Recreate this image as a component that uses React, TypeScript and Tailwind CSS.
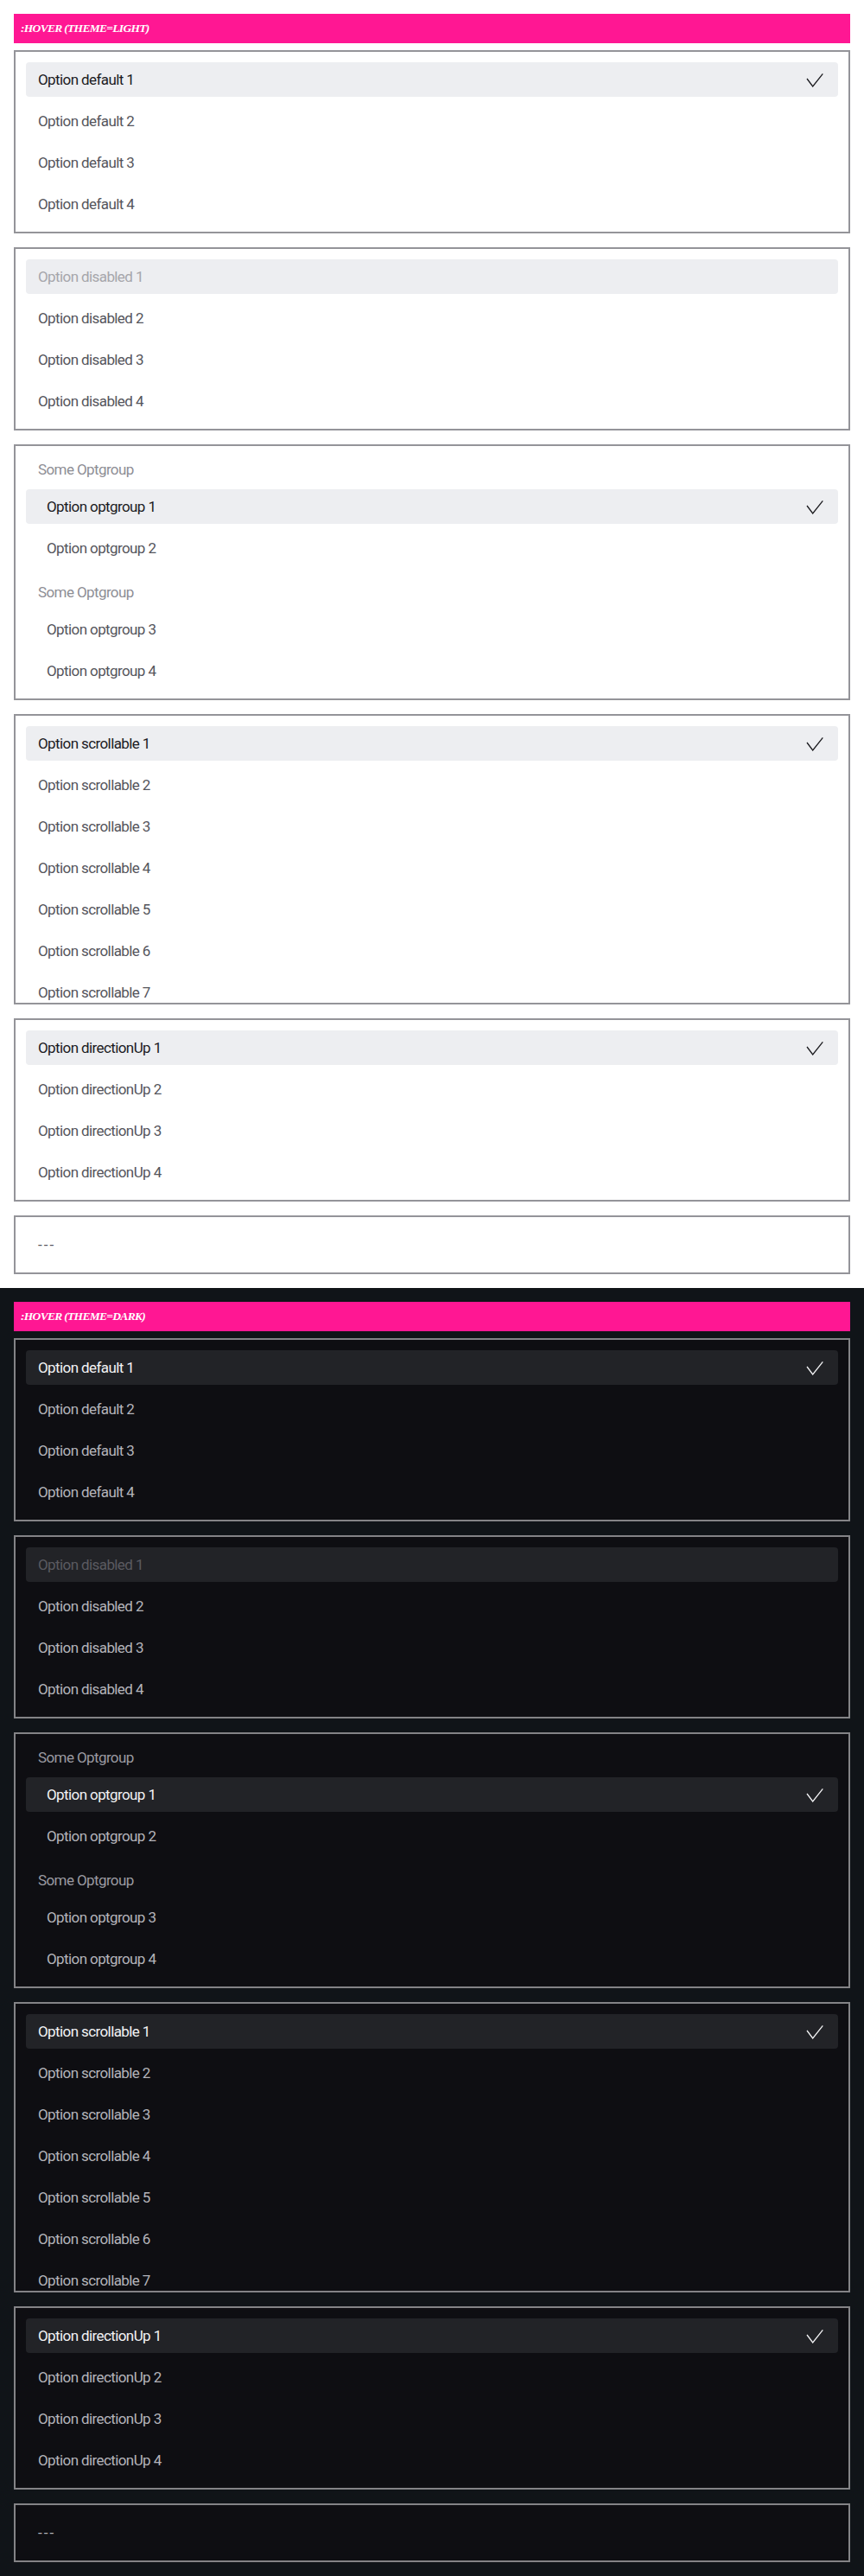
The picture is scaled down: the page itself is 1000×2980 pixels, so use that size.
import React from "react";

type Theme = "light" | "dark";

interface Palette {
  page: string;
  box: string;
  border: string;
  hover: string;
  selected: string;
  text: string;
  muted: string;
  disabled: string;
  check: string;
}

const palettes: Record<Theme, Palette> = {
  light: {
    page: "bg-white",
    box: "bg-white",
    border: "border-[#949499]",
    hover: "bg-[#edeef1]",
    selected: "text-[#1b1b1f]",
    text: "text-[#55555c]",
    muted: "text-[#8e8e95]",
    disabled: "text-[#a6a6ab]",
    check: "#1b1b1f",
  },
  dark: {
    page: "bg-[#101418]",
    box: "bg-[#0e0e12]",
    border: "border-[#838386]",
    hover: "bg-[#222327]",
    selected: "text-[#f2f2f4]",
    text: "text-[#b4b4ba]",
    muted: "text-[#9a9aa1]",
    disabled: "text-[#5a5a60]",
    check: "#f2f2f4",
  },
};

function Check({ color }: { color: string }) {
  return (
    <svg width="20" height="17" viewBox="0 0 20 17" fill="none" className="shrink-0">
      <polyline points="1,7 7.7,16 19.3,1.3" stroke={color} strokeWidth="1.3" strokeLinejoin="miter" />
    </svg>
  );
}

interface OptionProps {
  label: string;
  p: Palette;
  active?: boolean;
  checked?: boolean;
  disabled?: boolean;
  indent?: boolean;
}

function Option({ label, p, active, checked, disabled, indent }: OptionProps) {
  const color = disabled ? p.disabled : active ? p.selected : p.text;
  const spacing = label === "---" ? "tracking-[2px]" : "tracking-[-0.6px]";
  return (
    <div
      className={`flex h-10 shrink-0 items-center justify-between rounded-[4px] pr-[17px] ${indent ? "pl-6" : "pl-3.5"} ${
        active ? p.hover : ""
      }`}
    >
      <span className={`text-[17px] leading-[22px] ${spacing} ${color}`}>{label}</span>
      {checked ? <Check color={p.check} /> : null}
    </div>
  );
}

function Box({ p, children, scroll }: { p: Palette; children: React.ReactNode; scroll?: boolean }) {
  return (
    <div className={`border-2 ${p.border} ${p.box} ${scroll ? "h-[336px] overflow-hidden" : ""}`}>
      <div className="flex flex-col gap-2 p-3">{children}</div>
    </div>
  );
}

function Listbox({ name, p }: { name: string; p: Palette }) {
  return (
    <Box p={p}>
      {[1, 2, 3, 4].map((n) => (
        <Option key={n} label={`Option ${name} ${n}`} p={p} active={n === 1} checked={n === 1} />
      ))}
    </Box>
  );
}

function Section({ theme }: { theme: Theme }) {
  const p = palettes[theme];
  return (
    <section className={`${p.page} p-4`} style={{ fontFamily: "Roboto, 'Noto Sans', sans-serif" }}>
      <div className="flex h-[34px] items-center bg-[#ff1793] px-2">
        <span
          className="text-[13.5px] font-bold italic uppercase tracking-[-0.7px] text-white"
          style={{ fontFamily: "'Liberation Serif', 'DejaVu Serif', serif" }}
        >
          :hover (theme={theme})
        </span>
      </div>

      <div className="mt-2 flex flex-col gap-4">
        <Listbox name="default" p={p} />

        <Box p={p}>
          {[1, 2, 3, 4].map((n) => (
            <Option key={n} label={`Option disabled ${n}`} p={p} active={n === 1} disabled={n === 1} />
          ))}
        </Box>

        <div className={`border-2 ${p.border} ${p.box}`}>
          <div className="flex flex-col gap-4 p-3">
            {[0, 1].map((g) => (
              <div key={g} className="flex flex-col gap-2">
                <div className={`flex h-[30px] items-center pl-3.5 text-[17px] leading-[22px] tracking-[-0.6px] ${p.muted}`}>
                  Some Optgroup
                </div>
                {[1, 2].map((n) => {
                  const idx = g * 2 + n;
                  return (
                    <Option
                      key={idx}
                      label={`Option optgroup ${idx}`}
                      p={p}
                      indent
                      active={idx === 1}
                      checked={idx === 1}
                    />
                  );
                })}
              </div>
            ))}
          </div>
        </div>

        <Box p={p} scroll>
          {[1, 2, 3, 4, 5, 6, 7].map((n) => (
            <Option key={n} label={`Option scrollable ${n}`} p={p} active={n === 1} checked={n === 1} />
          ))}
        </Box>

        <Listbox name="directionUp" p={p} />

        <Box p={p}>
          <Option label="---" p={p} />
        </Box>
      </div>
    </section>
  );
}

export default function App() {
  return (
    <div className="w-[1000px]">
      <Section theme="light" />
      <Section theme="dark" />
    </div>
  );
}
